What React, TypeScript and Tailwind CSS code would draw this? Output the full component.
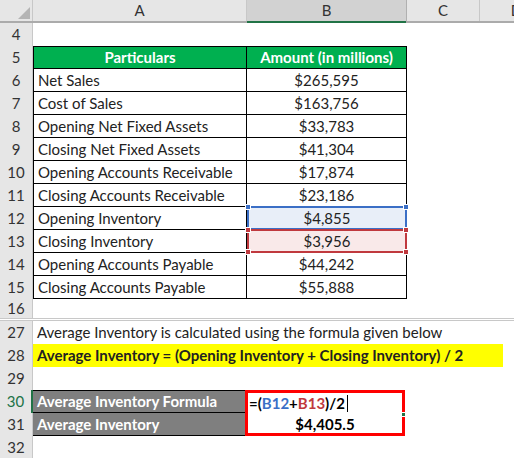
import React from 'react';

const font = { fontFamily: 'Lato, "Liberation Sans", sans-serif' };

function RowNum({ n, active }: { n: number; active?: boolean }) {
  return (
    <div
      className={`w-[33px] shrink-0 h-full flex items-center justify-center bg-[#e6e6e6] border-r border-[#c8c8c8] text-[15px] ${
        active ? 'text-[#217346] bg-[#d2d2d2] border-r-2 border-r-[#217346]' : 'text-[#333]'
      }`}
    >
      {n}
    </div>
  );
}

const data: [number, string, string][] = [
  [6, 'Net Sales', '$265,595'],
  [7, 'Cost of Sales', '$163,756'],
  [8, 'Opening Net Fixed Assets', '$33,783'],
  [9, 'Closing Net Fixed Assets', '$41,304'],
  [10, 'Opening Accounts Receivable', '$17,874'],
  [11, 'Closing Accounts Receivable', '$23,186'],
  [12, 'Opening Inventory', '$4,855'],
  [13, 'Closing Inventory', '$3,956'],
  [14, 'Opening Accounts Payable', '$44,242'],
  [15, 'Closing Accounts Payable', '$55,888'],
];

function Handle({ pos, color }: { pos: string; color: string }) {
  return <div className={`absolute w-[6px] h-[6px] border border-white ${color} ${pos}`} />;
}

export default function App() {
  return (
    <div className="w-[514px] h-[458px] overflow-hidden bg-white text-[15px] text-[#222]" style={font}>
      {/* column headers */}
      <div className="flex h-[23px] bg-[#e6e6e6] border-b-2 border-[#ababab]">
        <div className="w-[33px] shrink-0 h-full relative border-r border-[#c8c8c8]">
          <div className="absolute right-[2px] bottom-[2px] w-0 h-0 border-l-[12px] border-l-transparent border-b-[12px] border-b-[#b4b4b4]" />
        </div>
        <div className="w-[214px] shrink-0 flex items-center justify-center border-r border-[#c8c8c8] text-[#333]">A</div>
        <div className="w-[160px] shrink-0 flex items-center justify-center bg-[#d2d2d2] border-r border-[#b0b0b0] text-[#333] relative">
          B
          <div className="absolute left-0 right-0 -bottom-[2px] h-[2px] bg-[#217346]" />
        </div>
        <div className="w-[73px] shrink-0 flex items-center justify-center border-r border-[#c8c8c8] text-[#333]">C</div>
        <div className="w-[73px] shrink-0 flex items-center justify-center text-[#333]">D</div>
      </div>

      {/* row 4 */}
      <div className="flex h-[23px]">
        <RowNum n={4} />
      </div>

      {/* row 5 header */}
      <div className="flex h-[23px]">
        <RowNum n={5} />
        <div className="w-[214px] shrink-0 flex items-center justify-center bg-[#00b050] text-white font-bold border border-black">
          Particulars
        </div>
        <div className="w-[160px] shrink-0 flex items-center justify-center bg-[#00b050] text-white font-bold border-y border-r border-black">
          Amount (in millions)
        </div>
      </div>

      {data.map(([n, label, value]) => (
        <div key={n} className="flex h-[23px]">
          <RowNum n={n} />
          <div className="w-[214px] shrink-0 flex items-center pl-[4px] border-x border-b border-black">{label}</div>
          {n === 12 ? (
            <div className="w-[160px] shrink-0 relative flex items-center justify-center bg-[#e8eef8] border-2 border-[#3b6fc6] -mt-[1px] h-[24px]">
              {value}
              <Handle pos="-left-[4px] -top-[4px]" color="bg-[#3b6fc6]" />
              <Handle pos="-right-[4px] -top-[4px]" color="bg-[#3b6fc6]" />
            </div>
          ) : n === 13 ? (
            <div className="w-[160px] shrink-0 relative flex items-center justify-center bg-[#f9e9e9] border-2 border-[#c0393e] -mt-[1px] h-[24px]">
              {value}
              <Handle pos="-left-[4px] -top-[4px]" color="bg-[#c0393e]" />
              <Handle pos="-right-[4px] -top-[4px]" color="bg-[#c0393e]" />
              <Handle pos="-left-[4px] -bottom-[4px]" color="bg-[#c0393e]" />
              <Handle pos="-right-[4px] -bottom-[4px]" color="bg-[#c0393e]" />
            </div>
          ) : (
            <div className="w-[160px] shrink-0 flex items-center justify-center border-r border-b border-black">{value}</div>
          )}
        </div>
      ))}

      {/* row 16 */}
      <div className="flex h-[22px] border-b-[3px] border-double border-[#c8c8c8]">
        <RowNum n={16} />
      </div>

      {/* row 27 */}
      <div className="flex h-[23px]">
        <RowNum n={27} />
        <div className="flex items-center pl-[4px] whitespace-nowrap">
          Average Inventory is calculated using the formula given below
        </div>
      </div>

      {/* row 28 */}
      <div className="flex h-[23px]">
        <RowNum n={28} />
        <div className="w-[470px] shrink-0 flex items-center pl-[4px] bg-[#ffff00] font-bold whitespace-nowrap">
          Average Inventory = (Opening Inventory + Closing Inventory) / 2
        </div>
      </div>

      {/* row 29 */}
      <div className="flex h-[23px]">
        <RowNum n={29} />
      </div>

      {/* rows 30-31 */}
      <div className="flex h-[46px]">
        <div className="flex flex-col">
          <div className="h-[23px]">
            <RowNum n={30} active />
          </div>
          <div className="h-[23px]">
            <RowNum n={31} />
          </div>
        </div>
        <div className="w-[214px] shrink-0 flex flex-col bg-[#7f7f7f] text-white font-bold border-y border-black">
          <div className="h-[22px] flex items-center pl-[4px] border-b border-black">Average Inventory Formula</div>
          <div className="h-[22px] flex items-center pl-[4px]">Average Inventory</div>
        </div>
        <div className="w-[160px] shrink-0 relative flex flex-col border-[3px] border-[#ff0000] -ml-[2px] font-bold">
          <div className="h-[20px] flex items-center pl-[1px] text-black">
            =(<span className="text-[#3b6fc6]">B12</span>+<span className="text-[#c0393e]">B13</span>)/2
            <span className="inline-block w-px h-[17px] bg-black ml-[2px]" />
          </div>
          <div className="h-[2px] bg-[#217346] mr-[3px]" />
          <div className="flex-1 flex items-center justify-center text-black">$4,405.5</div>
          <div className="absolute -right-[4px] top-[19px] w-[5px] h-[5px] bg-[#217346] border border-white" />
        </div>
      </div>

      {/* row 32 */}
      <div className="flex h-[23px]">
        <RowNum n={32} />
      </div>
    </div>
  );
}
